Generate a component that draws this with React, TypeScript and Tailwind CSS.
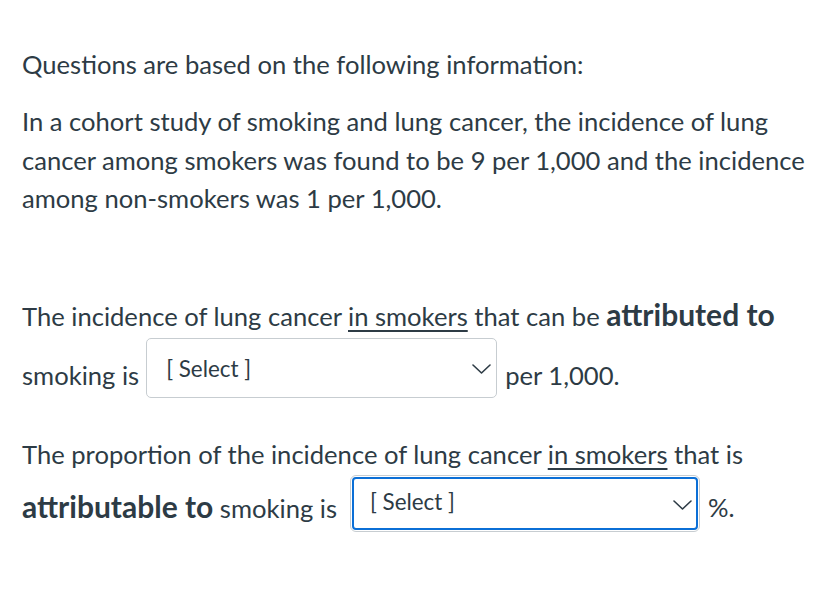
import React from "react"

function Chevron({ className }: { className?: string }) {
  return (
    <svg width="19" height="10" viewBox="0 0 19 10" className={className} fill="none">
      <polyline points="1,1 9.5,9 18,1" stroke="#2d3b45" strokeWidth="1.6" strokeLinecap="round" strokeLinejoin="round" />
    </svg>
  )
}

function SelectBox({ focused }: { focused?: boolean }) {
  if (focused) {
    return (
      <div className="w-[350px] h-[57px] shrink-0 rounded-[6px] border border-[#c7cdd1] p-[1px]">
        <div className="h-full w-full rounded-[4px] border-2 border-[#0b6fd6] flex items-center justify-between pl-[16px] pr-[4px]">
          <span className="text-[22.4px] leading-none -mt-[4px]">[ Select ]</span>
          <Chevron className="mt-[2px]" />
        </div>
      </div>
    )
  }
  return (
    <div className="w-[351px] h-[60px] shrink-0 rounded-[5px] border border-[#c7cdd1] flex items-center justify-between pl-[19px] pr-[5px]">
      <span className="text-[22.4px] leading-none mt-[2px]">[ Select ]</span>
      <Chevron className="mt-[1px]" />
    </div>
  )
}

export default function App() {
  return (
    <div
      className="min-h-screen bg-white px-[22px] pt-[45px] text-[25.6px] leading-[38.4px] text-[#2d3b45]"
      style={{ fontFamily: "Lato, 'Open Sans', sans-serif" }}
    >
      <p>Questions are based on the following information:</p>

      <p className="mt-[19px]">
        In a cohort study of smoking and lung cancer, the incidence of lung
        <br />
        cancer among smokers was found to be 9 per 1,000 and the incidence
        <br />
        among non-smokers was 1 per 1,000.
      </p>

      <div className="mt-[77px]">
        <div className="whitespace-nowrap">
          The incidence of lung cancer <span className="underline underline-offset-[4px] decoration-[1.5px]">in smokers</span> that can be{" "}
          <strong className="font-bold text-[30px]">attributed to</strong>
        </div>
        <div className="flex items-center h-[66px]">
          <span className="pt-[14px] mr-[7px]">smoking is</span>
          <SelectBox />
          <span className="pt-[14px] ml-[8px]">per 1,000.</span>
        </div>
      </div>

      <div className="mt-[34px]">
        <div className="whitespace-nowrap">
          The proportion of the incidence of lung cancer <span className="underline underline-offset-[4px] decoration-[1.5px]">in smokers</span> that is
        </div>
        <div className="flex items-center h-[61px]">
          <span className="pt-[7px] mr-[13px] whitespace-nowrap">
            <strong className="font-bold text-[30px]">attributable to</strong> smoking is
          </span>
          <SelectBox focused />
          <span className="pt-[7px] ml-[8px]">%.</span>
        </div>
      </div>
    </div>
  )
}
